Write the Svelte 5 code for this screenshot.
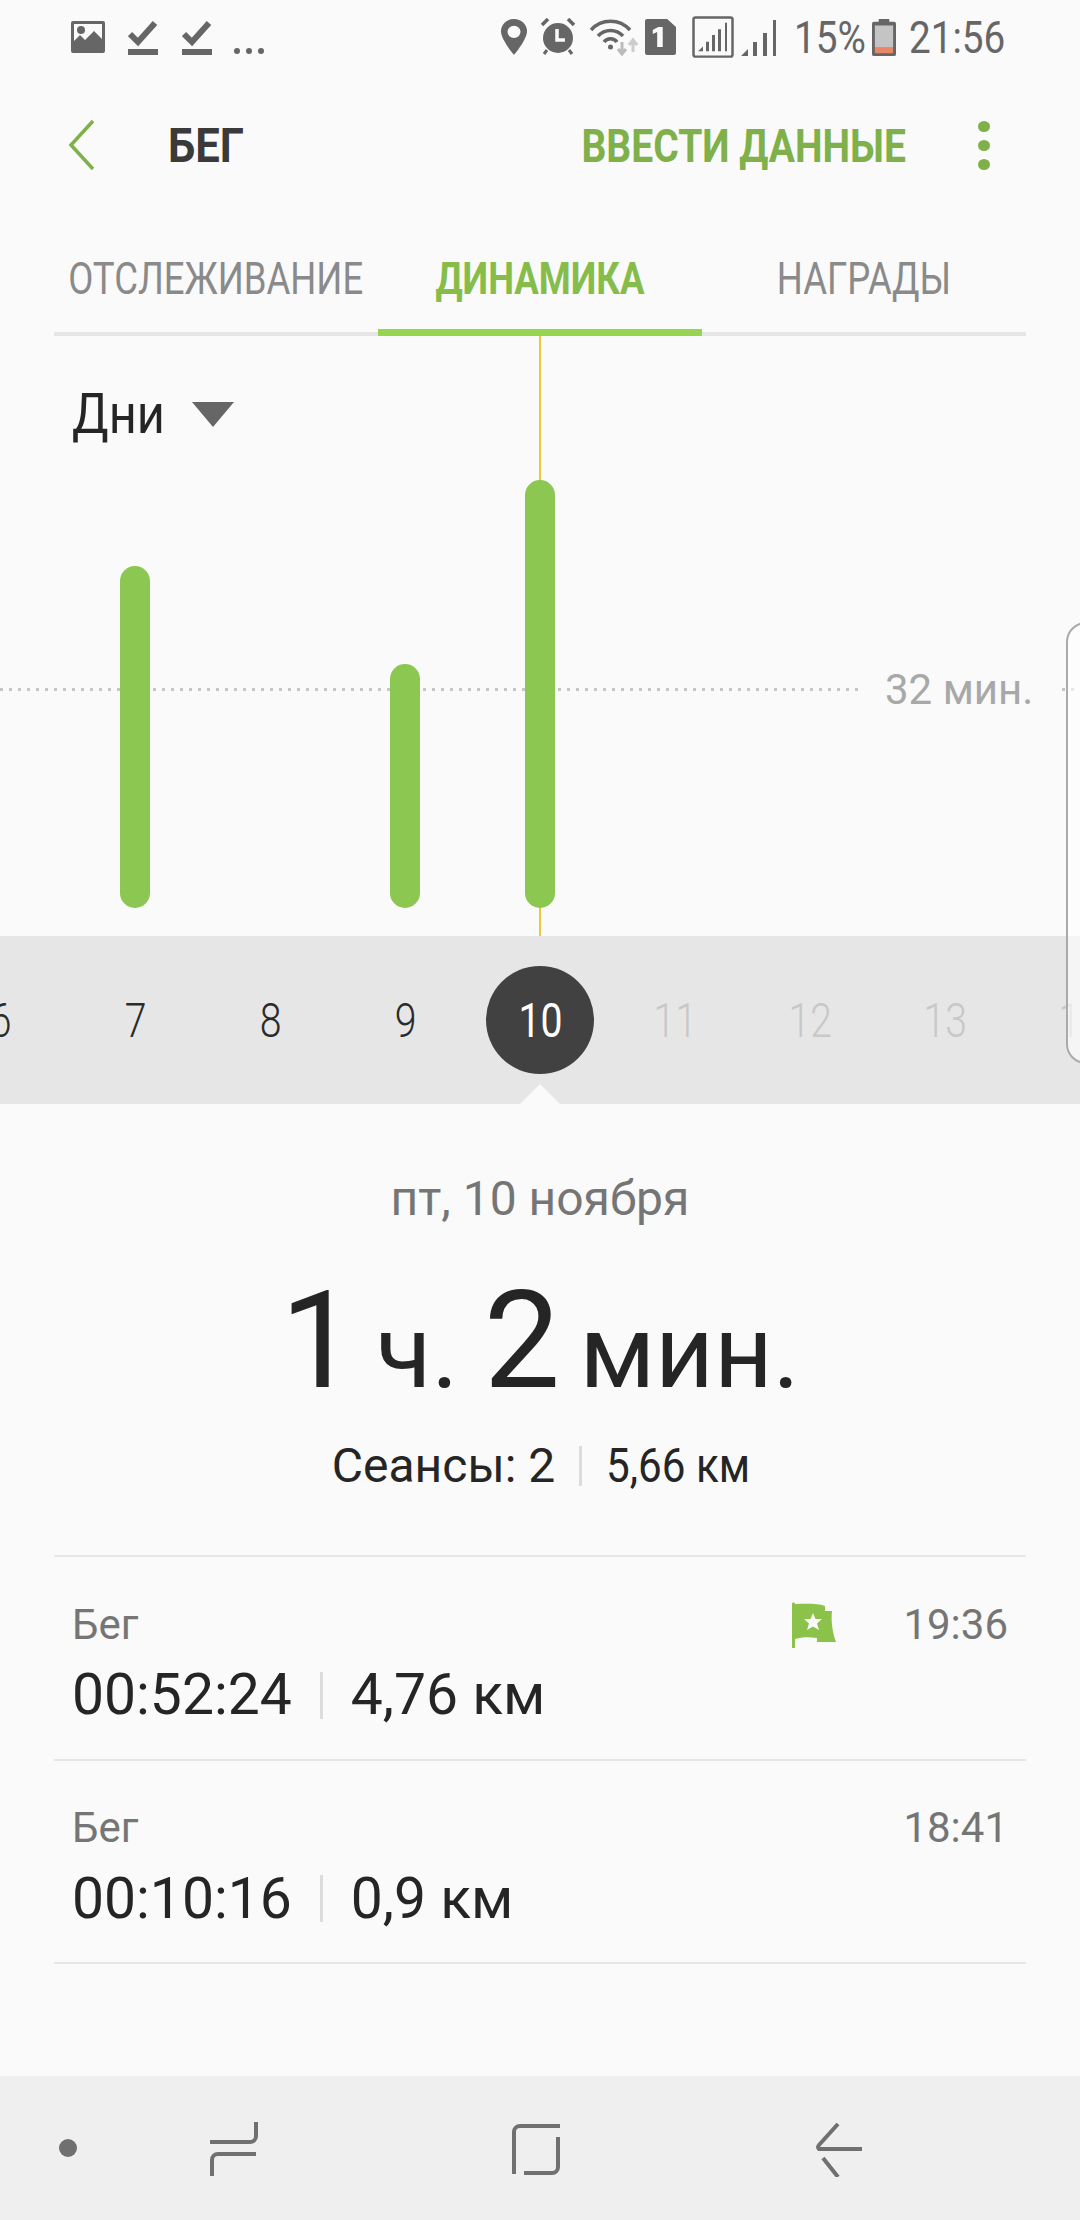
<script>
	const days = [
		{ n: 6, state: 'on' },
		{ n: 7, state: 'on' },
		{ n: 8, state: 'on' },
		{ n: 9, state: 'on' },
		{ n: 10, state: 'sel' },
		{ n: 11, state: 'off' },
		{ n: 12, state: 'off' },
		{ n: 13, state: 'off' },
		{ n: 14, state: 'off' }
	];

	const bars = [342, 0, 244, 428];

	const sessions = [
		{ name: 'Бег', time: '19:36', dur: '00:52:24', dist: '4,76 км', flag: true },
		{ name: 'Бег', time: '18:41', dur: '00:10:16', dist: '0,9 км', flag: false }
	];
</script>

<div class="screen">
	<div class="status">
		<div class="left">
			<svg class="pic" width="36" height="36" viewBox="0 0 36 36"><path fill-rule="evenodd" d="M3 2h30a2 2 0 0 1 2 2v28a2 2 0 0 1-2 2H3a2 2 0 0 1-2-2V4a2 2 0 0 1 2-2zm1 3v17l6-6 5 5 9-9 8 8V5z" fill="#666"/><circle cx="11" cy="11" r="4" fill="#666"/></svg>
			<svg width="30" height="36" viewBox="0 0 30 36"><path d="M2 15l8 8L27 4" fill="none" stroke="#666" stroke-width="6"/><rect y="30" width="30" height="6" fill="#666"/></svg>
			<svg width="30" height="36" viewBox="0 0 30 36"><path d="M2 15l8 8L27 4" fill="none" stroke="#666" stroke-width="6"/><rect y="30" width="30" height="6" fill="#666"/></svg>
			<svg class="dots" width="32" height="8" viewBox="0 0 32 8"><circle cx="4" cy="4" r="3" fill="#666"/><circle cx="16" cy="4" r="3" fill="#666"/><circle cx="28" cy="4" r="3" fill="#666"/></svg>
		</div>
		<div class="right">
			<svg width="26" height="36" viewBox="0 0 26 38" preserveAspectRatio="none"><path fill-rule="evenodd" d="M13 0a13 13 0 0 1 13 13c0 9-13 25-13 25S0 22 0 13A13 13 0 0 1 13 0zm0 7a6.500 6.500 0 1 0 0 13 6.500 6.500 0 0 0 0-13z" fill="#666"/></svg>
			<svg class="m13" width="36" height="38" viewBox="0 0 36 38"><path d="M2 7l6-6M34 7l-6-6" stroke="#666" stroke-width="3.500"/><path d="M7 32l-3 4M29 32l3 4" stroke="#666" stroke-width="3"/><circle cx="18" cy="20" r="15" fill="#666"/><path d="M17 11v11h8" fill="none" stroke="#fafafa" stroke-width="3.500"/></svg>
			<svg class="m14" width="48" height="38" viewBox="0 0 48 38"><path d="M1 12a26 26 0 0 1 39 0M8 18a17 17 0 0 1 25 0M14 24a8 8 0 0 1 13 0" fill="none" stroke="#666" stroke-width="3.500"/><circle cx="20.500" cy="29" r="2.500" fill="#666"/><path d="M32 24v12M28 31l4 5 4-5" fill="none" stroke="#bbb" stroke-width="3"/><path d="M43 34V22M39 27l4-5 4 5" fill="none" stroke="#ccc" stroke-width="3"/></svg>
			<svg class="m7" width="31" height="36" viewBox="0 0 28 36" preserveAspectRatio="none"><path fill-rule="evenodd" d="M2 0h18l8 8v26a2 2 0 0 1-2 2H2a2 2 0 0 1-2-2V2a2 2 0 0 1 2-2zm10 8l-5 3v4l4-2v15h5V8z" fill="#666"/></svg>
			<svg class="m16" width="42" height="42" viewBox="0 0 42 44" preserveAspectRatio="none"><rect x="1.500" y="1.500" width="39" height="41" rx="2" fill="none" stroke="#666" stroke-width="2.500"/><path d="M6 37l5-5v5zM14 37V27h3v10zM20 37V20h3v17zM26 37V14h3v23zM33 37V7h2v30z" fill="#666"/></svg>
			<svg class="m7" width="36" height="38" viewBox="0 0 36 38"><path d="M0 38l7-7v7zM12 38V24h4v14zM22 38V15h4v23zM32 38V2h3v36z" fill="#666"/></svg>
			<span class="pct">15%</span>
			<svg class="batt" width="24" height="37" viewBox="0 0 25 40" preserveAspectRatio="none"><path d="M7 0h11v3h5a2 2 0 0 1 2 2v33a2 2 0 0 1-2 2H2a2 2 0 0 1-2-2V5a2 2 0 0 1 2-2h5z" fill="#666"/><rect x="3" y="7" width="19" height="24" fill="#c4c4c4"/><rect x="3" y="31" width="19" height="6" fill="#e8866a"/></svg>
			<span class="clock">21:56</span>
		</div>
	</div>

	<div class="head">
		<svg class="back" width="30" height="52" viewBox="0 0 30 52"><path d="M27 2L5 26l22 24" fill="none" stroke="#7fb04a" stroke-width="3.500"/></svg>
		<span class="title">БЕГ</span>
		<span class="enter">ВВЕСТИ ДАННЫЕ</span>
		<span class="more"><i></i><i></i><i></i></span>
	</div>

	<div class="tabs">
		<div class="tab"><span>ОТСЛЕЖИВАНИЕ</span></div>
		<div class="tab active"><span>ДИНАМИКА</span></div>
		<div class="tab"><span>НАГРАДЫ</span></div>
	</div>

	<div class="chart">
		<div class="period">
			<span class="period-name">Дни</span>
			<span class="tri"></span>
		</div>
		<div class="marker"></div>
		<div class="goal"><span class="goal-label">32 мин.</span></div>
		<div class="bars">
			{#each bars as h}
				<div class="slot">
					{#if h}
						<div class="bar" style="height: {h}px"></div>
					{/if}
				</div>
			{/each}
		</div>
	</div>

	<div class="strip">
		{#each days as d}
			<div class="day {d.state}"><span>{d.n}</span></div>
		{/each}
		<div class="notch"></div>
	</div>

	<div class="handle"></div>

	<div class="summary">
		<div class="date">пт, 10 ноября</div>
		<div class="total"><b>1</b> ч. <b>2</b> мин.</div>
		<div class="sub"><span>Сеансы: 2</span><em></em><span class="narrow">5,66 км</span></div>
	</div>

	<div class="list">
		{#each sessions as s}
			<div class="row">
				<div class="row-top">
					<span class="row-name">{s.name}</span>
					{#if s.flag}
						<svg class="flag" width="46" height="48" viewBox="0 0 46 48"><path fill-rule="evenodd" d="M1 3a2.500 2.500 0 0 1 3 0v1c10 0 22-1 30 2v5h7c-1 9 0 20 4 31H26v-4c-8-1-15-1-22 1v9H1zm21 10l-2.500 6H13l5 4.500-2 6.500 6-3.500 6 3.500-2-6.500 5-4.500h-6.500z" fill="#8bc34a"/></svg>
					{/if}
					<span class="row-time">{s.time}</span>
				</div>
				<div class="row-main"><span>{s.dur}</span><em></em><span>{s.dist}</span></div>
			</div>
		{/each}
	</div>

	<div class="nav">
		<span class="dot"></span>
		<svg class="recent" width="48" height="54" viewBox="0 0 48 54"><path d="M46 0v14a6 6 0 0 1-6 6H0M46 32H8a6 6 0 0 0-6 6v16" fill="none" stroke="#707070" stroke-width="4"/></svg>
		<svg class="home" width="48" height="52" viewBox="0 0 48 52"><path d="M48 3H8a6 6 0 0 0-6 6v42M46 14v30a6 6 0 0 1-6 6H12" fill="none" stroke="#707070" stroke-width="4"/></svg>
		<svg class="nback" width="46" height="54" viewBox="0 0 46 54"><path d="M22 1L3 22a3 3 0 0 0 0 4h43M7 35l15 19" fill="none" stroke="#707070" stroke-width="4"/></svg>
	</div>
</div>

<style>
	:global(body) {
		margin: 0;
		background: #fafafa;
	}

	.screen {
		position: relative;
		width: 1080px;
		height: 2220px;
		overflow: hidden;
		background: #fafafa;
		font-family: Roboto, "Liberation Sans", sans-serif;
		color: #252525;
	}

	.status {
		display: flex;
		justify-content: space-between;
		align-items: center;
		height: 74px;
		padding: 0 75px 0 70px;
	}

	.left,
	.right {
		display: flex;
		align-items: center;
	}

	.left {
		gap: 24px;
	}

	.pic {
		margin-right: -2px;
	}

	.dots {
		margin-top: 28px;
		margin-left: -3px;
	}

	.m7 {
		margin-left: 7px;
	}

	.m13 {
		margin-left: 13px;
	}

	.m14 {
		margin-left: 14px;
	}

	.m16 {
		margin-left: 16px;
	}

	.pct,
	.clock {
		font-size: 45px;
		color: #666;
		transform: scaleX(0.86);
		transform-origin: left;
		white-space: nowrap;
	}

	.pct {
		width: 68px;
		margin-left: 17px;
	}

	.batt {
		margin-left: 10px;
	}

	.clock {
		width: 96px;
		margin-left: 13px;
	}

	.head {
		display: flex;
		align-items: center;
		height: 142px;
		padding: 0 0 0 66px;
	}

	.title {
		margin-left: 72px;
		font-size: 49px;
		font-weight: 700;
		color: #3a3a3a;
		transform: scaleX(0.89);
		transform-origin: left;
	}

	.enter {
		margin-left: auto;
		font-size: 47px;
		font-weight: 700;
		color: #7fb04a;
		white-space: nowrap;
		transform: scaleX(0.83);
		transform-origin: right;
	}

	.more {
		display: flex;
		flex-direction: column;
		gap: 8px;
		margin: 0 90px 0 72px;
	}

	.more i {
		width: 12px;
		height: 11px;
		border-radius: 50%;
		background: #7fb04a;
	}

	.tabs {
		display: grid;
		grid-template-columns: 324px 324px 324px;
		height: 120px;
		margin: 0 54px;
		border-bottom: 4px solid #e6e6e6;
		box-sizing: border-box;
	}

	.tab {
		position: relative;
		display: flex;
		align-items: center;
		justify-content: center;
		margin-bottom: -4px;
		padding-top: 5px;
		font-size: 44px;
		color: #8a8a8a;
		white-space: nowrap;
	}

	.tab span {
		transform: scaleX(0.83);
	}

	.active {
		color: #86bd4a;
		font-weight: 700;
	}

	.active::after {
		content: '';
		position: absolute;
		left: 0;
		right: 0;
		bottom: 0;
		height: 7px;
		background: #97d450;
	}

	.chart {
		position: relative;
		height: 600px;
	}

	.period {
		display: flex;
		align-items: center;
		gap: 28px;
		padding: 45px 0 0 72px;
	}

	.period-name {
		width: 92px;
		font-size: 56px;
		color: #252525;
		transform: scaleX(0.87);
		transform-origin: left;
	}

	.tri {
		width: 0;
		height: 0;
		border-left: 21px solid transparent;
		border-right: 21px solid transparent;
		border-top: 25px solid #666;
	}

	.marker {
		position: absolute;
		left: 539px;
		top: 0;
		bottom: 0;
		width: 2px;
		background: #f0c63c;
	}

	.goal {
		position: absolute;
		left: 0;
		right: 0;
		top: 352px;
		height: 3px;
		background: repeating-linear-gradient(90deg, #c6c6c6 0 3px, transparent 3px 9px);
	}

	.goal-label {
		position: absolute;
		left: 860px;
		top: -28px;
		width: 196px;
		box-sizing: border-box;
		padding-left: 25px;
		font-size: 42px;
		line-height: 60px;
		color: #a8a8a8;
		background: #fafafa;
		white-space: nowrap;
	}

	.bars {
		position: absolute;
		left: 67px;
		top: 0;
		bottom: 28px;
		display: flex;
	}

	.slot {
		display: flex;
		align-items: flex-end;
		justify-content: center;
		width: 135px;
	}

	.bar {
		width: 30px;
		border-radius: 15px;
		background: #8bc751;
	}

	.strip {
		position: relative;
		display: flex;
		height: 168px;
		background: #e6e6e6;
		margin-left: -67px;
	}

	.day {
		display: flex;
		align-items: center;
		justify-content: center;
		flex: 0 0 135px;
		font-size: 49px;
		font-weight: 300;
		color: #2a2a2a;
	}

	.day span {
		display: block;
		transform: scaleX(0.8);
	}

	.off {
		color: #c8c8c8;
	}

	.sel {
		position: relative;
		color: #fff;
	}

	.sel::before {
		content: '';
		position: absolute;
		left: 13px;
		top: 30px;
		width: 108px;
		height: 108px;
		border-radius: 50%;
		background: #414141;
	}

	.sel span {
		position: relative;
		font-weight: 400;
	}

	.notch {
		position: absolute;
		left: 587px;
		bottom: 0;
		width: 0;
		height: 0;
		border-left: 20px solid transparent;
		border-right: 20px solid transparent;
		border-bottom: 20px solid #fafafa;
	}

	.handle {
		position: absolute;
		left: 1066px;
		top: 622px;
		width: 30px;
		height: 442px;
		box-sizing: border-box;
		border: 2px solid #aaa;
		border-radius: 20px 0 0 20px;
		background: rgba(255, 255, 255, 0.6);
	}

	.summary {
		display: flex;
		flex-direction: column;
		align-items: center;
	}

	.date {
		margin-top: 68px;
		font-size: 48px;
		line-height: 54px;
		color: #757575;
	}

	.total {
		margin-top: 55px;
		font-size: 102px;
		line-height: 120px;
		white-space: nowrap;
	}

	.total b {
		margin-right: -6px;
		font-size: 136px;
		font-weight: 400;
	}

	.sub {
		display: flex;
		align-items: center;
		margin-top: 27px;
		font-size: 48px;
		line-height: 54px;
	}

	.narrow {
		width: 142px;
		white-space: nowrap;
		transform: scaleX(0.88);
		transform-origin: left;
	}

	.sub em {
		display: block;
		width: 3px;
		height: 40px;
		margin: 0 24px;
		background: #dcdcdc;
	}

	.list {
		margin: 62px 54px 0;
		border-top: 2px solid #e6e6e6;
	}

	.row {
		height: 203.5px;
		box-sizing: border-box;
		border-bottom: 2px solid #e6e6e6;
		padding: 42px 18px 0;
	}

	.row-top {
		display: flex;
		align-items: center;
		height: 50px;
	}

	.row-name {
		font-size: 42px;
		color: #757575;
	}

	.flag {
		margin-left: auto;
		margin-right: 66px;
	}

	.row-time {
		margin-left: auto;
		font-size: 42px;
		color: #757575;
	}

	.flag + .row-time {
		margin-left: 0;
	}

	.row-main {
		display: flex;
		align-items: center;
		margin-top: 11px;
		font-size: 57px;
		line-height: 70px;
		color: #252525;
	}

	.row-main em {
		display: block;
		width: 3px;
		height: 47px;
		margin: 0 28px;
		background: #dcdcdc;
	}

	.nav {
		position: absolute;
		left: 0;
		right: 0;
		bottom: 0;
		height: 144px;
		background: #efefef;
	}

	.nav > * {
		position: absolute;
	}

	.dot {
		left: 59px;
		top: 63px;
		width: 18px;
		height: 18px;
		border-radius: 50%;
		background: #707070;
	}

	.recent {
		left: 210px;
		top: 46px;
	}

	.home {
		left: 512px;
		top: 47px;
	}

	.nback {
		left: 816px;
		top: 47px;
	}
</style>
